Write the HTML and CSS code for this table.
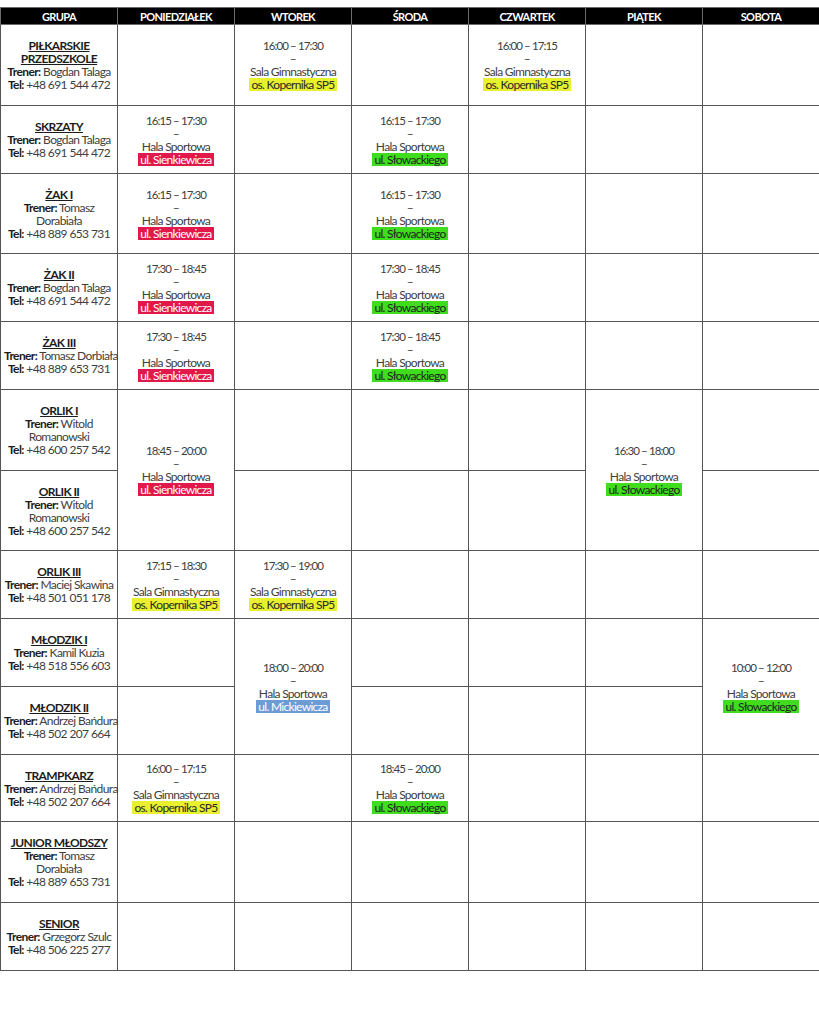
FILE: index.html
```html
<!DOCTYPE html>
<html lang="pl">
<head>
<meta charset="utf-8">
<title>Harmonogram</title>
<link rel="stylesheet" href="styles.css">
</head>
<body>
<div class="page">
<table class="schedule">
  <colgroup>
    <col class="c"><col class="c"><col class="c"><col class="c"><col class="c"><col class="c"><col class="c">
  </colgroup>
  <thead>
    <tr class="head">
      <th>GRUPA</th><th>PONIEDZIAŁEK</th><th>WTOREK</th><th>ŚRODA</th><th>CZWARTEK</th><th>PIĄTEK</th><th>SOBOTA</th>
    </tr>
  </thead>
  <tbody>
    <tr class="h81">
      <td class="grp"><span class="name">PIŁKARSKIE<br>PRZEDSZKOLE</span><br><b>Trener:</b> Bogdan Talaga<br><b>Tel:</b> +48 691 544 472</td>
      <td></td>
      <td class="slot"><span class="time">16:00 – 17:30</span><br>–<br>Sala Gimnastyczna<br><span class="tag yellow">os. Kopernika SP5</span></td>
      <td></td>
      <td class="slot"><span class="time">16:00 – 17:15</span><br>–<br>Sala Gimnastyczna<br><span class="tag yellow">os. Kopernika SP5</span></td>
      <td></td>
      <td></td>
    </tr>
    <tr class="h68">
      <td class="grp"><span class="name">SKRZATY</span><br><b>Trener:</b> Bogdan Talaga<br><b>Tel:</b> +48 691 544 472</td>
      <td class="slot"><span class="time">16:15 – 17:30</span><br>–<br>Hala Sportowa<br><span class="tag red">ul. Sienkiewicza</span></td>
      <td></td>
      <td class="slot"><span class="time">16:15 – 17:30</span><br>–<br>Hala Sportowa<br><span class="tag green">ul. Słowackiego</span></td>
      <td></td><td></td><td></td>
    </tr>
    <tr class="h80">
      <td class="grp"><span class="name">ŻAK I</span><br><b>Trener:</b> Tomasz<br>Dorabiała<br><b>Tel:</b> +48 889 653 731</td>
      <td class="slot"><span class="time">16:15 – 17:30</span><br>–<br>Hala Sportowa<br><span class="tag red">ul. Sienkiewicza</span></td>
      <td></td>
      <td class="slot"><span class="time">16:15 – 17:30</span><br>–<br>Hala Sportowa<br><span class="tag green">ul. Słowackiego</span></td>
      <td></td><td></td><td></td>
    </tr>
    <tr class="h68">
      <td class="grp"><span class="name">ŻAK II</span><br><b>Trener:</b> Bogdan Talaga<br><b>Tel:</b> +48 691 544 472</td>
      <td class="slot"><span class="time">17:30 – 18:45</span><br>–<br>Hala Sportowa<br><span class="tag red">ul. Sienkiewicza</span></td>
      <td></td>
      <td class="slot"><span class="time">17:30 – 18:45</span><br>–<br>Hala Sportowa<br><span class="tag green">ul. Słowackiego</span></td>
      <td></td><td></td><td></td>
    </tr>
    <tr class="h68">
      <td class="grp"><span class="name">ŻAK III</span><br><b>Trener:</b> Tomasz Dorbiała<br><b>Tel:</b> +48 889 653 731</td>
      <td class="slot"><span class="time">17:30 – 18:45</span><br>–<br>Hala Sportowa<br><span class="tag red">ul. Sienkiewicza</span></td>
      <td></td>
      <td class="slot"><span class="time">17:30 – 18:45</span><br>–<br>Hala Sportowa<br><span class="tag green">ul. Słowackiego</span></td>
      <td></td><td></td><td></td>
    </tr>
    <tr class="h81">
      <td class="grp"><span class="name">ORLIK I</span><br><b>Trener:</b> Witold<br>Romanowski<br><b>Tel:</b> +48 600 257 542</td>
      <td class="slot" rowspan="2"><span class="time">18:45 – 20:00</span><br>–<br>Hala Sportowa<br><span class="tag red">ul. Sienkiewicza</span></td>
      <td></td><td></td><td></td>
      <td class="slot" rowspan="2"><span class="time">16:30 – 18:00</span><br>–<br>Hala Sportowa<br><span class="tag green">ul. Słowackiego</span></td>
      <td></td>
    </tr>
    <tr class="h80">
      <td class="grp"><span class="name">ORLIK II</span><br><b>Trener:</b> Witold<br>Romanowski<br><b>Tel:</b> +48 600 257 542</td>
      <td></td><td></td><td></td>
      <td></td>
    </tr>
    <tr class="h68">
      <td class="grp"><span class="name">ORLIK III</span><br><b>Trener:</b> Maciej Skawina<br><b>Tel:</b> +48 501 051 178</td>
      <td class="slot"><span class="time">17:15 – 18:30</span><br>–<br>Sala Gimnastyczna<br><span class="tag yellow">os. Kopernika SP5</span></td>
      <td class="slot"><span class="time">17:30 – 19:00</span><br>–<br>Sala Gimnastyczna<br><span class="tag yellow">os. Kopernika SP5</span></td>
      <td></td><td></td><td></td><td></td>
    </tr>
    <tr class="h68">
      <td class="grp"><span class="name">MŁODZIK I</span><br><b>Trener:</b> Kamil Kuzia<br><b>Tel:</b> +48 518 556 603</td>
      <td></td>
      <td class="slot" rowspan="2"><span class="time">18:00 – 20:00</span><br>–<br>Hala Sportowa<br><span class="tag blue">ul. Mickiewicza</span></td>
      <td></td><td></td><td></td>
      <td class="slot" rowspan="2"><span class="time">10:00 – 12:00</span><br>–<br>Hala Sportowa<br><span class="tag green">ul. Słowackiego</span></td>
    </tr>
    <tr class="h68">
      <td class="grp"><span class="name">MŁODZIK II</span><br><b>Trener:</b> Andrzej Bańdura<br><b>Tel:</b> +48 502 207 664</td>
      <td></td>
      <td></td><td></td><td></td>
    </tr>
    <tr class="h67">
      <td class="grp"><span class="name">TRAMPKARZ</span><br><b>Trener:</b> Andrzej Bańdura<br><b>Tel:</b> +48 502 207 664</td>
      <td class="slot"><span class="time">16:00 – 17:15</span><br>–<br>Sala Gimnastyczna<br><span class="tag yellow">os. Kopernika SP5</span></td>
      <td></td>
      <td class="slot"><span class="time">18:45 – 20:00</span><br>–<br>Hala Sportowa<br><span class="tag green">ul. Słowackiego</span></td>
      <td></td><td></td><td></td>
    </tr>
    <tr class="h81">
      <td class="grp"><span class="name">JUNIOR MŁODSZY</span><br><b>Trener:</b> Tomasz<br>Dorabiała<br><b>Tel:</b> +48 889 653 731</td>
      <td></td><td></td><td></td><td></td><td></td><td></td>
    </tr>
    <tr class="h68">
      <td class="grp"><span class="name">SENIOR</span><br><b>Trener:</b> Grzegorz Szulc<br><b>Tel:</b> +48 506 225 277</td>
      <td></td><td></td><td></td><td></td><td></td><td></td>
    </tr>
  </tbody>
</table>
</div>
</body>
</html>
```

FILE: styles.css
```css
html, body {
  margin: 0;
  padding: 0;
  background: #ffffff;
}

.page {
  padding-top: 7px;
  width: 820px;
}

.schedule {
  border-collapse: collapse;
  table-layout: fixed;
  width: 820px;
  font-family: Lato, "Liberation Sans", sans-serif;
  font-size: 12px;
  line-height: 13px;
  color: #404040;
}

.schedule col.c {
  width: 117px;
}

.schedule th {
  background: #000000;
  color: #ffffff;
  font-weight: bold;
  font-size: 11px;
  letter-spacing: -0.6px;
  height: 16px;
  padding: 0;
  border: 1px solid #6a6a6a;
  text-align: center;
  vertical-align: middle;
  line-height: 15px;
}

.schedule td {
  border: 1px solid #555555;
  padding: 0 3px;
  text-align: center;
  vertical-align: middle;
  white-space: nowrap;
  overflow: visible;
}

.grp {
  letter-spacing: -0.6px;
}

.slot {
  letter-spacing: -0.7px;
}

.slot .time {
  font-size: 11.5px;
  letter-spacing: -0.9px;
}

.schedule b {
  color: #1c1c1c;
}

.grp .name {
  font-weight: bold;
  color: #1c1c1c;
  text-decoration: underline;
  text-underline-offset: 1px;
}

.tag {
  padding: 0 2px;
  display: inline-block;
  line-height: 13px;
}

.tag.yellow { background: #e9f02e; color: #2a2a2a; }
.tag.red { background: #e2184b; color: #ffffff; }
.tag.green { background: #40dc1e; color: #1f1f1f; }
.tag.blue { background: #6d9bd6; color: #ffffff; }

tr.h81 { height: 81px; }
tr.h80 { height: 80px; }
tr.h68 { height: 68px; }
tr.h67 { height: 67px; }
```
